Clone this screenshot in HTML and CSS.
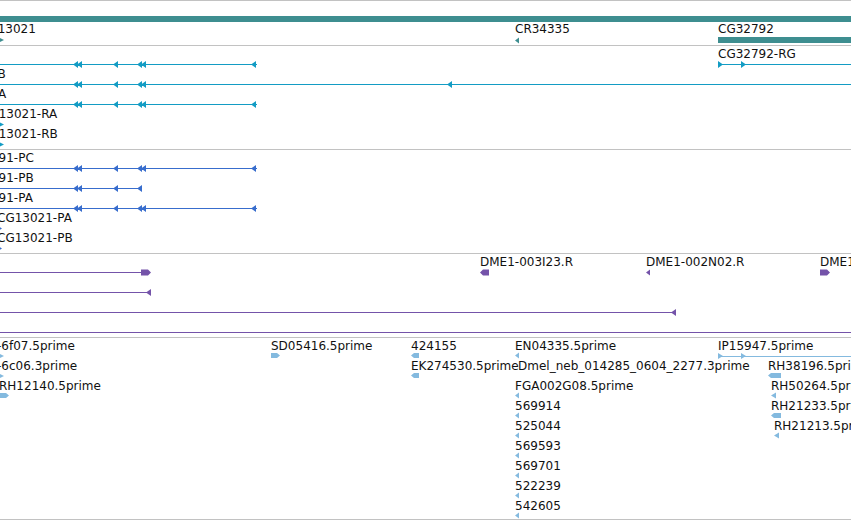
FILE: index.html
```html
<!DOCTYPE html>
<html lang="en">
<head>
    <meta charset="UTF-8">
    <meta name="viewport" content="width=device-width, initial-scale=1.0">
    <title>Annotation tracks</title>
    <link rel="stylesheet" href="styles.css">
</head>
<body>
    <div id="tracks">
        <!-- gene track -->
        <div class="track t-gene">
            <div class="row">
                <svg class="teal"><rect x="0" y="15" width="851" height="6"/></svg>
            </div>
            <div class="row">
                <svg class="teal">
                    <path d="M-1 16.5v5l5-2.5z M515 19.5l4-3v6z"/>
                    <rect x="718" y="16" width="133" height="6"/>
                </svg>
                <span class="lbl" style="left:-20px">CG13021</span>
                <span class="lbl" style="left:515px">CR34335</span>
                <span class="lbl" style="left:718px">CG32792</span>
            </div>
        </div>

        <!-- transcripts -->
        <div class="track t-rna">
            <div class="row">
                <svg class="cyan">
                    <rect x="0" y="18" width="257" height="1"/>
                    <path d="M73 18.5l5-3.5v7z M77 18.5l5-3.5v7z M113 18.5l5-3.5v7z M137 18.5l5-3.5v7z M141 18.5l5-3.5v7z M251 18.5l5-3.5v7z"/>
                    <rect x="718" y="18" width="133" height="1"/>
                    <path d="M718 15v7l5-3.5z M741 15v7l5-3.5z"/>
                </svg>
                <span class="lbl" style="left:718px">CG32792-RG</span>
            </div>
            <div class="row">
                <svg class="cyan">
                    <rect x="0" y="18" width="851" height="1"/>
                    <path d="M73 18.5l5-3.5v7z M77 18.5l5-3.5v7z M113 18.5l5-3.5v7z M137 18.5l5-3.5v7z M141 18.5l5-3.5v7z M447 18.5l5-3.5v7z"/>
                </svg>
                <span class="lbl" style="left:-71px">CG32791-RB</span>
            </div>
            <div class="row">
                <svg class="cyan">
                    <rect x="0" y="18" width="257" height="1"/>
                    <path d="M73 18.5l5-3.5v7z M77 18.5l5-3.5v7z M113 18.5l5-3.5v7z M137 18.5l5-3.5v7z M141 18.5l5-3.5v7z M251 18.5l5-3.5v7z"/>
                </svg>
                <span class="lbl" style="left:-70px">CG32791-RA</span>
            </div>
            <div class="row">
                <svg class="cyan"><path d="M-1 16v5l5-2.5z"/></svg>
                <span class="lbl" style="left:-19px">CG13021-RA</span>
            </div>
            <div class="row">
                <svg class="cyan"><path d="M-1 16v5l5-2.5z"/></svg>
                <span class="lbl" style="left:-19px">CG13021-RB</span>
            </div>
        </div>

        <!-- proteins -->
        <div class="track t-prot">
            <div class="row">
                <svg class="blue">
                    <rect x="0" y="18" width="257" height="1"/>
                    <path d="M73 18.5l5-3.5v7z M77 18.5l5-3.5v7z M113 18.5l5-3.5v7z M137 18.5l5-3.5v7z M141 18.5l5-3.5v7z M251 18.5l5-3.5v7z"/>
                </svg>
                <span class="lbl" style="left:-42px">CG32791-PC</span>
            </div>
            <div class="row">
                <svg class="blue">
                    <rect x="0" y="18" width="142" height="1"/>
                    <path d="M73 18.5l5-3.5v7z M77 18.5l5-3.5v7z M113 18.5l5-3.5v7z M137 18.5l5-3.5v7z"/>
                </svg>
                <span class="lbl" style="left:-42px">CG32791-PB</span>
            </div>
            <div class="row">
                <svg class="blue">
                    <rect x="0" y="18" width="257" height="1"/>
                    <path d="M73 18.5l5-3.5v7z M77 18.5l5-3.5v7z M113 18.5l5-3.5v7z M137 18.5l5-3.5v7z M141 18.5l5-3.5v7z M251 18.5l5-3.5v7z"/>
                </svg>
                <span class="lbl" style="left:-42px">CG32791-PA</span>
            </div>
            <div class="row">
                <svg class="blue"><path d="M-2 16v5l4-2.5z"/></svg>
                <span class="lbl" style="left:-3px">CG13021-PA</span>
            </div>
            <div class="row">
                <svg class="blue"><path d="M-2 16v5l4-2.5z"/></svg>
                <span class="lbl" style="left:-3px">CG13021-PB</span>
            </div>
        </div>

        <!-- BAC ends -->
        <div class="track t-bac">
            <div class="row">
                <svg class="purple">
                    <rect x="0" y="18" width="142" height="1"/>
                    <path d="M141 15.5h7l3 3l-3 3h-7z M480 18.5l3-3h6v6h-6z M646 18.5l4-3v6z M820 15.5h7l3 3l-3 3h-7z"/>
                </svg>
                <span class="lbl" style="left:480px">DME1-003I23.R</span>
                <span class="lbl" style="left:646px">DME1-002N02.R</span>
                <span class="lbl" style="left:820px">DME1-001K15.R</span>
            </div>
            <div class="row">
                <svg class="purple">
                    <rect x="0" y="18" width="147" height="1"/>
                    <path d="M146 18.5l5-3.5v7z"/>
                </svg>
            </div>
            <div class="row">
                <svg class="purple">
                    <rect x="0" y="18" width="672" height="1"/>
                    <path d="M671 18.5l5-3.5v7z"/>
                </svg>
            </div>
            <div class="row">
                <svg class="purple"><rect x="0" y="18" width="851" height="1"/></svg>
            </div>
        </div>

        <!-- ESTs -->
        <div class="track t-est">
            <div class="row">
                <svg class="sky">
                    <path d="M-1 15.5v5l5-2.5z M271 15h6l3 2.5l-3 2.5h-6z M411 17.5l3-2.5h5v5h-5z M515 17.5l4-3v6z"/>
                    <rect x="718" y="18" width="133" height="1"/>
                    <path d="M718 15v6l5-3z M741 15v6l5-3z"/>
                </svg>
                <span class="lbl" style="left:-3px">-6f07.5prime</span>
                <span class="lbl" style="left:271px">SD05416.5prime</span>
                <span class="lbl" style="left:411px">424155</span>
                <span class="lbl" style="left:515px">EN04335.5prime</span>
                <span class="lbl" style="left:718px">IP15947.5prime</span>
            </div>
            <div class="row">
                <svg class="sky">
                    <path d="M-1 15.5v5l5-2.5z M411 17.5l3-2.5h5v5h-5z M768 17.5l3-2.5h10v5h-10z"/>
                </svg>
                <span class="lbl" style="left:-3px">-6c06.3prime</span>
                <span class="lbl" style="left:411px">EK274530.5prime</span>
                <span class="lbl" style="left:518px">Dmel_neb_014285_0604_2277.3prime</span>
                <span class="lbl" style="left:768px">RH38196.5prime</span>
            </div>
            <div class="row">
                <svg class="sky">
                    <path d="M-1 15h7l3 2.5l-3 2.5h-7z M515 17.5l4-3v6z M771 17.5l5-3v6z"/>
                </svg>
                <span class="lbl" style="left:-1px">RH12140.5prime</span>
                <span class="lbl" style="left:515px">FGA002G08.5prime</span>
                <span class="lbl" style="left:771px">RH50264.5prime</span>
            </div>
            <div class="row">
                <svg class="sky"><path d="M515 17.5l4-3v6z M771 17.5l3-2.5h7v5h-7z"/></svg>
                <span class="lbl" style="left:515px">569914</span>
                <span class="lbl" style="left:771px">RH21233.5prime</span>
            </div>
            <div class="row">
                <svg class="sky"><path d="M515 17.5l4-3v6z M774 17.5l5-3v6z"/></svg>
                <span class="lbl" style="left:515px">525044</span>
                <span class="lbl" style="left:774px">RH21213.5prime</span>
            </div>
            <div class="row">
                <svg class="sky"><path d="M515 17.5l4-3v6z"/></svg>
                <span class="lbl" style="left:515px">569593</span>
            </div>
            <div class="row">
                <svg class="sky"><path d="M515 17.5l4-3v6z"/></svg>
                <span class="lbl" style="left:515px">569701</span>
            </div>
            <div class="row">
                <svg class="sky"><path d="M515 17.5l4-3v6z"/></svg>
                <span class="lbl" style="left:515px">522239</span>
            </div>
            <div class="row">
                <svg class="sky"><path d="M515 17.5l4-3v6z"/></svg>
                <span class="lbl" style="left:515px">542605</span>
            </div>
        </div>
    </div>
</body>
</html>
```

FILE: styles.css
```css
body {
    margin: 0;
    background-color: white;
    font-family: "DejaVu Sans", sans-serif;
    font-size: 12px;
    color: #111;
    overflow: hidden;
}
#tracks {
    width: 851px;
}
.track {
    border-top: 1px solid #c2c2c2;
    overflow: hidden;
}
.t-gene {
    height: 44px;
}
.t-rna, .t-prot {
    height: 103px;
}
.t-bac {
    height: 83px;
}
.t-est {
    height: 181px;
    border-bottom: 1px solid #c2c2c2;
}
.row {
    position: relative;
    height: 20px;
}
.row svg {
    position: absolute;
    left: 0;
    top: 0;
    width: 851px;
    height: 24px;
    overflow: visible;
}
.lbl {
    position: absolute;
    top: 1px;
    line-height: 14px;
    white-space: nowrap;
}
.teal {
    fill: #3e8e90;
}
.cyan {
    fill: #139cc4;
}
.blue {
    fill: #386dcd;
}
.purple {
    fill: #7453a9;
}
.sky {
    fill: #84badf;
}
```
